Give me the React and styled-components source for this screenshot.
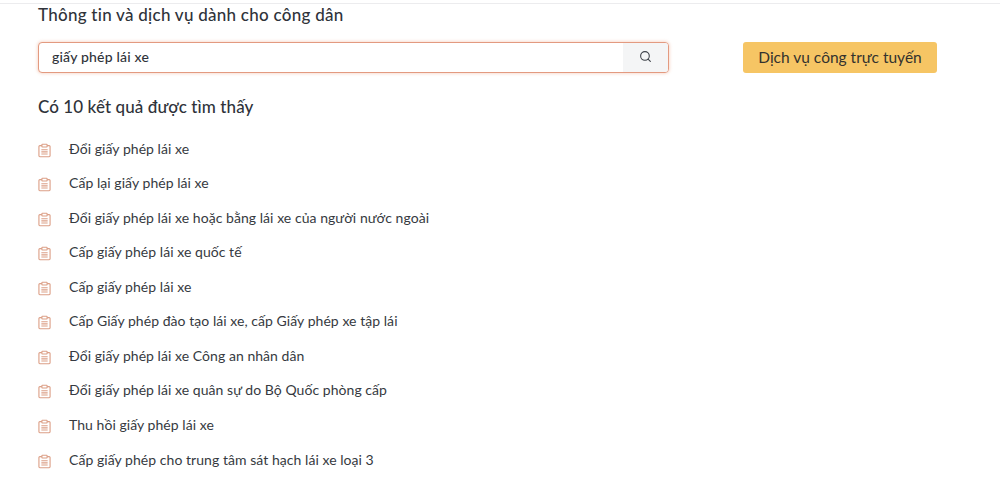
import React from 'react';
import styled, { createGlobalStyle } from 'styled-components';
import { Search } from 'lucide-react';

const GlobalStyle = createGlobalStyle`
  html, body {
    margin: 0;
    padding: 0;
    background: #ffffff;
    overflow: hidden;
  }
  body {
    font-family: "Lato", "Noto Sans", sans-serif;
    color: #2b2f36;
  }
`;

const Page = styled.div`
  width: 1000px;
  height: 497px;
  overflow: hidden;
  box-sizing: border-box;
  padding: 5px 0 0 38px;
`;

const TopLine = styled.div`
  height: 1px;
  margin: -2px 0 1px -38px;
  background: #ececee;
`;

const Title = styled.h2`
  margin: 0;
  font-size: 17px;
  line-height: 20px;
  font-weight: 500;
  letter-spacing: 0.26px;
  color: #2f333a;
`;

const SearchRow = styled.div`
  display: flex;
  align-items: center;
  margin-top: 17px;
`;

const SearchBox = styled.div`
  display: flex;
  width: 631px;
  height: 31px;
  box-sizing: border-box;
  border: 1px solid #e39a80;
  border-radius: 4px;
  box-shadow: 0 0 3px 1px rgba(236, 160, 130, 0.35);
  overflow: hidden;
  background: #fff;
`;

const SearchText = styled.div`
  flex: 1;
  padding-left: 13px;
  font-size: 14px;
  line-height: 28px;
  font-weight: 500;
  letter-spacing: 0.2px;
  color: #2f333a;
`;

const SearchButton = styled.div`
  width: 45px;
  padding-bottom: 2px;
  box-sizing: border-box;
  display: flex;
  align-items: center;
  justify-content: center;
  background: #f4f5f6;
  color: #3d4148;
`;

const ServiceButton = styled.div`
  margin-left: 74px;
  width: 194px;
  height: 31px;
  border-radius: 3px;
  background: #f6c564;
  color: #33322e;
  font-size: 15.5px;
  line-height: 31px;
  text-align: center;
`;

const ResultTitle = styled.h3`
  margin: 24px 0 0;
  font-size: 17px;
  line-height: 20px;
  font-weight: 500;
  letter-spacing: 0.08px;
  color: #2f333a;
`;

const ResultList = styled.ul`
  list-style: none;
  margin: 21.6px 0 0;
  padding: 0;
  display: flex;
  flex-direction: column;
  gap: 14.55px;
`;

const ResultItem = styled.li`
  display: flex;
  align-items: center;
  height: 20px;
  font-size: 14px;
  line-height: 20px;
  letter-spacing: 0.05px;
  color: #363a41;
`;

const IconWrap = styled.span`
  width: 31px;
  height: 20px;
  display: flex;
  align-items: center;
  color: #dc9f86;

  svg {
    margin-top: 3px;
  }
`;

const NoteIcon = () => (
  <svg width="13" height="15" viewBox="0 0 14 15" fill="none" stroke="currentColor" strokeWidth="1.2">
    <path d="M4.2 2.2H2a1 1 0 0 0-1 1v10a1 1 0 0 0 1 1h10a1 1 0 0 0 1-1v-10a1 1 0 0 0-1-1H9.8" />
    <rect x="4.2" y="0.8" width="5.6" height="3" rx="0.6" />
    <path d="M3.6 6.7h6.8M3.6 9h6.8M3.6 11.3h6.8" />
  </svg>
);

const results = [
  'Đổi giấy phép lái xe',
  'Cấp lại giấy phép lái xe',
  'Đổi giấy phép lái xe hoặc bằng lái xe của người nước ngoài',
  'Cấp giấy phép lái xe quốc tế',
  'Cấp giấy phép lái xe',
  'Cấp Giấy phép đào tạo lái xe, cấp Giấy phép xe tập lái',
  'Đổi giấy phép lái xe Công an nhân dân',
  'Đổi giấy phép lái xe quân sự do Bộ Quốc phòng cấp',
  'Thu hồi giấy phép lái xe',
  'Cấp giấy phép cho trung tâm sát hạch lái xe loại 3',
];

const App = () => (
  <Page>
    <GlobalStyle />
    <TopLine />
    <Title>Thông tin và dịch vụ dành cho công dân</Title>
    <SearchRow>
      <SearchBox>
        <SearchText>giấy phép lái xe</SearchText>
        <SearchButton>
          <Search size={13} strokeWidth={2} />
        </SearchButton>
      </SearchBox>
      <ServiceButton>Dịch vụ công trực tuyến</ServiceButton>
    </SearchRow>
    <ResultTitle>Có 10 kết quả được tìm thấy</ResultTitle>
    <ResultList>
      {results.map((item) => (
        <ResultItem key={item}>
          <IconWrap><NoteIcon /></IconWrap>
          {item}
        </ResultItem>
      ))}
    </ResultList>
  </Page>
);

export default App;
